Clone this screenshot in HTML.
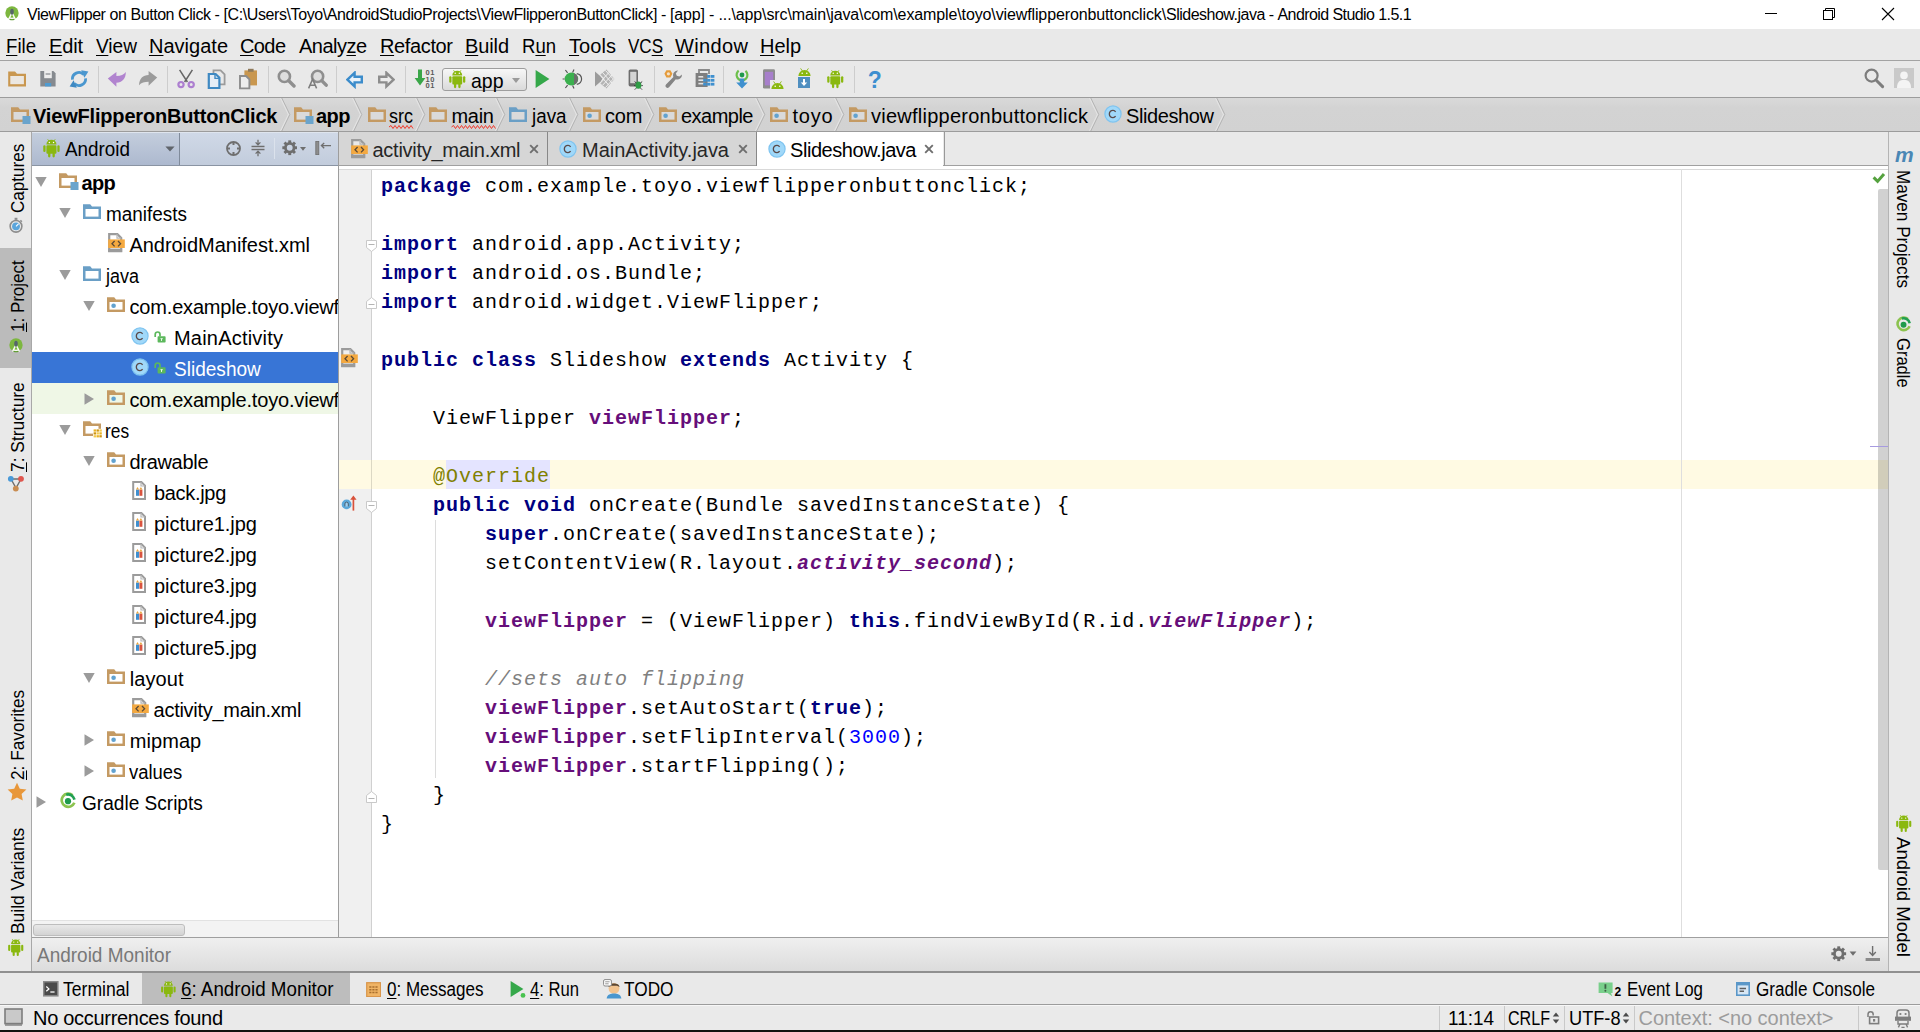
<!DOCTYPE html>
<html lang="en"><head><meta charset="utf-8"><title>ViewFlipper on Button Click - Android Studio 1.5.1</title><style>
html,body{margin:0;padding:0}
body{width:1920px;height:1032px;position:relative;overflow:hidden;background:#e9e9e9;font-family:"Liberation Sans",sans-serif;color:#000}
.a{position:absolute}
.t{position:absolute;white-space:pre;line-height:30px}
.c{position:absolute;white-space:pre;font-family:"Liberation Mono",monospace;font-size:20px;letter-spacing:1px;line-height:29px;left:381px;color:#000;height:29px}
.k{color:#000080;font-weight:bold}
.f{color:#660e7a;font-weight:bold}
.s{color:#660e7a;font-weight:bold;font-style:italic}
.n{color:#0000ff}
.m{color:#808080;font-style:italic}
.o{color:#808000}
u{text-decoration-thickness:1px;text-underline-offset:2px}
</style></head>
<body>
<div class="a" style="left:0px;top:0px;width:1920px;height:29px;background:#fff;"></div>
<svg class="a" style="left:5px;top:6.2px;" width="14" height="15.2" viewBox="0 0 18 19.6"><circle cx="9" cy="9" r="8.6" fill="#7db73f"/><path d="M9 8.6 L4.6 17.4 M9 8.6 L13.4 17.4" stroke="#fff" stroke-width="1.9" fill="none" opacity=".95"/><path d="M5.2 15 Q9 17.2 12.8 15" stroke="#fff" stroke-width="1.7" fill="none" opacity=".95"/><ellipse cx="9" cy="7.4" rx="2.3" ry="3.9" fill="#56656b"/><path d="M5.6 17.6 Q9 19 12.4 17.6 L11.8 16.4 Q9 17.6 6.2 16.4 Z" fill="#5d9a2e"/></svg>
<div class="t" style="left:27px;top:0px;font-size:16px;"><span style="letter-spacing:-0.436px">ViewFlipper on Button Click - </span><span style="letter-spacing:-0.405px">[C:\Users\Toyo\AndroidStudioProjects\ViewFlipperonButtonClick] - </span><span style="letter-spacing:-0.163px">[app] - </span><span style="letter-spacing:-0.122px">...\app\src\main\java\com\example\toyo\viewflipperonbuttonclick\</span><span style="letter-spacing:-0.504px">Slideshow.java - </span><span style="letter-spacing:-0.575px">Android Studio 1.5.1</span></div>
<svg class="a" style="left:1760px;top:4px;" width="140" height="20" viewBox="0 0 140 20"><path d="M5 9.5 H17" stroke="#000" stroke-width="1"/><rect x="63.5" y="6.5" width="9" height="9" fill="none" stroke="#000" stroke-width="1"/><path d="M65.5 6.5 V4.5 H74.5 V13.5 H72.5" fill="none" stroke="#000" stroke-width="1"/><path d="M122 4 L134 16 M134 4 L122 16" stroke="#000" stroke-width="1.1"/></svg>
<div class="a" style="left:0px;top:29px;width:1920px;height:31px;background:#e9e9e9;"></div>
<div class="a" style="left:0px;top:60px;width:1920px;height:1px;background:#a3a3a3;"></div>
<div class="t" style="left:6.00px;top:31px;font-size:20px;transform-origin:0 0;transform:scaleX(0.9311);"><u>F</u>ile</div>
<div class="t" style="left:49.00px;top:31px;font-size:20px;letter-spacing:-0.153px;"><u>E</u>dit</div>
<div class="t" style="left:96.00px;top:31px;font-size:20px;transform-origin:0 0;transform:scaleX(0.9526);"><u>V</u>iew</div>
<div class="t" style="left:149.00px;top:31px;font-size:20px;letter-spacing:0.009px;"><u>N</u>avigate</div>
<div class="t" style="left:240.00px;top:31px;font-size:20px;letter-spacing:-0.607px;"><u>C</u>ode</div>
<div class="t" style="left:299.00px;top:31px;font-size:20px;letter-spacing:-0.527px;">Analy<u>z</u>e</div>
<div class="t" style="left:380.00px;top:31px;font-size:20px;letter-spacing:-0.369px;"><u>R</u>efactor</div>
<div class="t" style="left:465.00px;top:31px;font-size:20px;letter-spacing:-0.120px;"><u>B</u>uild</div>
<div class="t" style="left:522.00px;top:31px;font-size:20px;transform-origin:0 0;transform:scaleX(0.9269);">R<u>u</u>n</div>
<div class="t" style="left:569.00px;top:31px;font-size:20px;letter-spacing:0.080px;"><u>T</u>ools</div>
<div class="t" style="left:628.00px;top:31px;font-size:20px;transform-origin:0 0;transform:scaleX(0.8512);">VC<u>S</u></div>
<div class="t" style="left:675.00px;top:31px;font-size:20px;letter-spacing:0.364px;"><u>W</u>indow</div>
<div class="t" style="left:760.00px;top:31px;font-size:20px;letter-spacing:-0.047px;"><u>H</u>elp</div>
<div class="a" style="left:0px;top:61px;width:1920px;height:36px;background:#e9e9e9;"></div>
<div class="a" style="left:0px;top:97px;width:1920px;height:1px;background:#9c9c9c;"></div>
<div class="a" style="left:98px;top:66px;width:1px;height:27px;background:#cdcdcd;"></div>
<div class="a" style="left:167px;top:66px;width:1px;height:27px;background:#cdcdcd;"></div>
<div class="a" style="left:268px;top:66px;width:1px;height:27px;background:#cdcdcd;"></div>
<div class="a" style="left:336px;top:66px;width:1px;height:27px;background:#cdcdcd;"></div>
<div class="a" style="left:405px;top:66px;width:1px;height:27px;background:#cdcdcd;"></div>
<div class="a" style="left:654px;top:66px;width:1px;height:27px;background:#cdcdcd;"></div>
<div class="a" style="left:723px;top:66px;width:1px;height:27px;background:#cdcdcd;"></div>
<div class="a" style="left:854px;top:66px;width:1px;height:27px;background:#cdcdcd;"></div>
<svg class="a" style="left:8px;top:71px;" width="19" height="16" viewBox="0 0 19 16"><path d="M0.2 0.4 H7 L9 2.8 H18 V15.4 H0.2 Z" fill="#c9974f"/><rect x="2.3" y="5" width="13.6" height="8.2" fill="#ebe7e1"/></svg>
<svg class="a" style="left:40px;top:71px;" width="16" height="16" viewBox="0 0 16 16"><path d="M0.3 0 H13.4 L15.6 2.2 V15.4 H0.3 Z" fill="#868a8f"/><rect x="4.2" y="0" width="7.6" height="7.2" fill="#ededed"/><rect x="5.6" y="2.4" width="4.8" height="1.2" fill="#868a8f"/><rect x="5" y="12" width="6.2" height="3.4" fill="#4f9bd0"/></svg>
<svg class="a" style="left:69px;top:69px;" width="20" height="20" viewBox="0 0 20 20"><path d="M3.4 10.6 A6.6 6.6 0 0 1 14.6 5.4 M16.6 9.4 A6.6 6.6 0 0 1 5.4 14.6" fill="none" stroke="#4a97cf" stroke-width="2.8"/><path d="M12.2 1.2 L19.4 2.4 L15.4 8.8 Z" fill="#4a97cf"/><path d="M7.8 18.8 L0.6 17.6 L4.6 11.2 Z" fill="#3f89c2"/></svg>
<svg class="a" style="left:107px;top:70px;" width="20" height="18" viewBox="0 0 20 18"><path d="M0.8 8.6 L9.4 2 V6 C14 6 16.8 4.4 18.8 2 C19 8.6 15 12.8 9.4 12.8 V16.8 Z" fill="#b184cf"/></svg>
<svg class="a" style="left:138px;top:70px;" width="20" height="18" viewBox="0 0 20 18"><path d="M19.2 7.6 L10.6 1 V5 C5 5 1.4 8.4 1 15.2 C3.4 12.4 6.4 11.8 10.6 11.8 V15.8 Z" fill="#9b9b9b"/></svg>
<svg class="a" style="left:176px;top:69px;" width="20" height="20" viewBox="0 0 20 20"><path d="M3.6 0.8 L11.4 13 M16.4 0.8 L8.6 13" stroke="#666" stroke-width="1.5" fill="none"/><circle cx="5" cy="15.6" r="2.6" fill="none" stroke="#ad7fd0" stroke-width="2.2"/><circle cx="15.2" cy="15.6" r="2.6" fill="none" stroke="#ad7fd0" stroke-width="2.2"/></svg>
<svg class="a" style="left:207px;top:69px;" width="20" height="21" viewBox="0 0 20 21"><path d="M6.5 1.4 H13.6 L17.6 5.4 V15.4 H6.5 Z" fill="#e9e9e9" stroke="#9b9b9b" stroke-width="1.8"/><path d="M1.8 5 H8.6 L12.4 8.8 V19 H1.8 Z" fill="#e6eef6" stroke="#3f89c2" stroke-width="2.2"/><path d="M8 5 V9.4 H12.4" fill="none" stroke="#3f89c2" stroke-width="1.4"/></svg>
<svg class="a" style="left:238px;top:68px;" width="20" height="22" viewBox="0 0 20 22"><rect x="6.4" y="2.4" width="12.6" height="15" fill="#c9974f"/><rect x="10" y="0.8" width="5.6" height="3" fill="#8f7a5a"/><path d="M2 8 H8 L11.4 11.4 V20.4 H2 Z" fill="#ededed" stroke="#8d8d8d" stroke-width="1.9"/></svg>
<svg class="a" style="left:276px;top:68px;" width="20" height="21" viewBox="0 0 20 21"><circle cx="8.4" cy="8.4" r="5.6" fill="#dedede" stroke="#8f8f8f" stroke-width="2.6"/><path d="M12.8 12.8 L18 18" stroke="#8f8f8f" stroke-width="3.4" stroke-linecap="round"/></svg>
<svg class="a" style="left:306px;top:68px;" width="22" height="22" viewBox="0 0 22 22"><circle cx="11.6" cy="8.4" r="5.6" fill="#dedede" stroke="#8f8f8f" stroke-width="2.6"/><path d="M16 12.8 L20.2 17.2" stroke="#8f8f8f" stroke-width="3.4" stroke-linecap="round"/><path d="M2.6 20.4 L6.6 11.2 L10.6 20.4 M4 17.2 H9.2" fill="none" stroke="#7d7d7d" stroke-width="1.5"/></svg>
<svg class="a" style="left:346px;top:71px;" width="18" height="18" viewBox="0 0 18 18"><path d="M1.4 8.6 L8.6 1.8 V5.8 H15.8 V11.4 H8.6 V15.4 Z" fill="#e9f2fa" stroke="#3b8ccb" stroke-width="2.4"/></svg>
<svg class="a" style="left:377px;top:71px;" width="18" height="18" viewBox="0 0 18 18"><path d="M16.6 8.6 L9.4 1.8 V5.8 H2.2 V11.4 H9.4 V15.4 Z" fill="#ececec" stroke="#8d8d8d" stroke-width="2.4"/></svg>
<svg class="a" style="left:414px;top:69px;" width="12" height="18" viewBox="0 0 12 18"><path d="M4 0.6 H8 V9 H11.4 L6 16.6 L0.6 9 H4 Z" fill="#3aa648"/></svg>
<div class="t" style="left:425.50px;top:58px;font-size:7.5px;letter-spacing:0.660px;color:#5a5a5a;font-weight:bold;">01</div>
<div class="t" style="left:425.50px;top:65px;font-size:7.5px;letter-spacing:0.660px;color:#5a5a5a;font-weight:bold;">10</div>
<div class="t" style="left:425.50px;top:71px;font-size:7.5px;letter-spacing:0.660px;color:#5a5a5a;font-weight:bold;">01</div>
<div class="a" style="left:442px;top:68px;width:85px;height:23px;background:linear-gradient(#f7f7f7,#dadada);border:1px solid #9d9d9d;border-radius:3px;box-sizing:border-box;"></div>
<svg class="a" style="left:447.73px;top:69.215px;" width="18.54" height="19.57" viewBox="0 0 18 19"><g fill="#8ab80f"><path d="M4.2 6.2 A4.8 4.6 0 0 1 13.8 6.2 Z"/><rect x="4.2" y="7" width="9.6" height="8" rx="1"/><rect x="1.2" y="7" width="2.2" height="6.4" rx="1.1"/><rect x="14.6" y="7" width="2.2" height="6.4" rx="1.1"/><rect x="5.8" y="14" width="2.2" height="4.6" rx="1.1"/><rect x="10" y="14" width="2.2" height="4.6" rx="1.1"/><path d="M5.4 1.2 L6.6 3 M12.6 1.2 L11.4 3" stroke="#8ab80f" stroke-width="0.8"/></g><circle cx="7" cy="4.2" r="0.7" fill="#fff"/><circle cx="11" cy="4.2" r="0.7" fill="#fff"/></svg>
<div class="t" style="left:470.50px;top:66px;font-size:21px;transform-origin:0 0;transform:scaleX(0.9278);">app</div>
<svg class="a" style="left:511.5px;top:77.5px;" width="8" height="5" viewBox="0 0 8 5"><path d="M0 0 H8 L4 5 Z" fill="#9a9a9a"/></svg>
<svg class="a" style="left:535px;top:70px;" width="15" height="18" viewBox="0 0 15 18"><path d="M0.6 0 L14.4 9 L0.6 18 Z" fill="#35a84a"/></svg>
<svg class="a" style="left:562px;top:68px;" width="23" height="22" viewBox="0 0 23 22"><ellipse cx="9.4" cy="11" rx="6.8" ry="6.4" fill="#3bb04e"/><path d="M12 5.2 A6.8 6.4 0 0 1 12 16.8 Z" fill="#6d6d6d"/><path d="M5.6 4.8 L3.4 2 M10.6 4.4 L12 1.6 M5.6 17.2 L3.4 20 M10.6 17.6 L12 20.4 M2.6 11 H0.6 M14.8 5.6 C17.6 6 19.4 8 19.6 11 C19.4 14 17.6 16 14.8 16.4" fill="none" stroke="#555" stroke-width="1.2"/></svg>
<svg class="a" style="left:594px;top:69px;" width="22" height="20" viewBox="0 0 22 20"><path d="M1 2.4 L9.6 10 L1 17.6 Z" fill="#9b9b9b"/><path d="M6.4 5.6 L12.4 0.6 L20.4 10 L12.4 19.4 L6.4 14.4 L10.8 10 Z" fill="#b4b4b4"/><path d="M8.4 3.4 L18 14 M11.4 1.4 L19.8 10.6 M7 7.4 L15 16.4 M18 6 L8.8 16 M19.8 9.4 L11.4 18.6 M15 3.4 L7.4 11.6" stroke="#f0f0f0" stroke-width="1" fill="none"/></svg>
<svg class="a" style="left:627px;top:68px;" width="20" height="23" viewBox="0 0 20 23"><rect x="1.6" y="1.4" width="9.4" height="17" rx="1.6" fill="#6d6d6d"/><rect x="3.2" y="3.8" width="6.2" height="11.4" fill="#d4d4d4"/><ellipse cx="11.4" cy="17.2" rx="3" ry="3.6" fill="#2f9e47"/><path d="M7.6 13.6 L9.4 15 M15.2 13.6 L13.4 15 M7 17.6 H8.4 M15.8 17.6 H14.4 M7.8 21.6 L9.2 20.2 M15 21.6 L13.6 20.2" stroke="#3a3a3a" stroke-width="1"/></svg>
<svg class="a" style="left:663px;top:69px;" width="21" height="21" viewBox="0 0 21 21"><path d="M19 5.6 A4.6 4.6 0 0 1 12.8 10.2 L6 18.2 A2 2 0 0 1 3 15.4 L10.4 8 A4.6 4.6 0 0 1 15 1.6 L12.8 4.4 L13.8 6.8 L16.4 7.4 Z" fill="#858585"/><path d="M3.4 1.2 L7.4 1.2 L9.4 4.8 L7.4 8.4 L3.4 8.4 L1.4 4.8 Z" fill="#e59b3a"/><circle cx="5.4" cy="4.8" r="1.6" fill="#f4e2c8"/></svg>
<svg class="a" style="left:695px;top:69px;" width="20" height="20" viewBox="0 0 20 20"><path d="M4 5 V1 H14 V5" fill="none" stroke="#8a8a8a" stroke-width="1.8"/><rect x="0.6" y="4" width="12" height="14" fill="#7f7f7f"/><rect x="3.4" y="7" width="6" height="1.6" fill="#e4e4e4"/><rect x="3.4" y="10.4" width="6" height="1.6" fill="#e4e4e4"/><rect x="3.4" y="13.8" width="6" height="1.6" fill="#e4e4e4"/><rect x="12.1" y="6" width="3.4" height="2.8" fill="#3f90cf"/><rect x="16" y="6" width="3.4" height="2.8" fill="#3f90cf"/><rect x="8.2" y="9.9" width="3.4" height="2.8" fill="#3f90cf"/><rect x="12.1" y="9.9" width="3.4" height="2.8" fill="#3f90cf"/><rect x="16" y="9.9" width="3.4" height="2.8" fill="#3f90cf"/><rect x="8.2" y="13.8" width="3.4" height="2.8" fill="#3f90cf"/><rect x="12.1" y="13.8" width="3.4" height="2.8" fill="#3f90cf"/><rect x="16" y="13.8" width="3.4" height="2.8" fill="#3f90cf"/><rect x="8.2" y="6" width="3.4" height="2.8" fill="#7f7f7f"/></svg>
<svg class="a" style="left:732px;top:68px;" width="20" height="22" viewBox="0 0 20 22"><circle cx="10" cy="7" r="5.4" fill="none" stroke="#6cc04a" stroke-width="2.2" stroke-dasharray="26 8" transform="rotate(-50 10 7)"/><circle cx="10" cy="7" r="2.4" fill="#1f9a4c"/><path d="M7.8 10.4 H12.2 V14.6 H15.8 L10 20.6 L4.2 14.6 H7.8 Z" fill="#3f90cf"/></svg>
<svg class="a" style="left:762px;top:68px;" width="15" height="22" viewBox="0 0 15 22"><rect x="1" y="1.2" width="12" height="19.4" rx="1.4" fill="#8d8d8d"/><rect x="2.8" y="3.8" width="8.4" height="13.6" fill="#a77fcb"/></svg>
<div class="a" style="left:769.6px;top:80px;width:14.4px;height:9px;background:#e9e9e9;"></div>
<svg class="a" style="left:770.5px;top:80.8px;" width="13" height="8" viewBox="0 0 13 8"><path d="M0.4 8 A6.1 6 0 0 1 12.6 8 Z" fill="#8ab80f"/><path d="M2.6 0.4 L4.4 3 M10.4 0.4 L8.6 3" stroke="#8ab80f" stroke-width="0.9"/><circle cx="4.2" cy="5.2" r="0.8" fill="#fff"/><circle cx="8.8" cy="5.2" r="0.8" fill="#fff"/></svg>
<svg class="a" style="left:797.5px;top:68.4px;" width="13" height="8" viewBox="0 0 13 8"><path d="M0.4 8 A6.1 6 0 0 1 12.6 8 Z" fill="#8ab80f"/><path d="M2.6 0.4 L4.4 3 M10.4 0.4 L8.6 3" stroke="#8ab80f" stroke-width="0.9"/><circle cx="4.2" cy="5.2" r="0.8" fill="#fff"/><circle cx="8.8" cy="5.2" r="0.8" fill="#fff"/></svg>
<svg class="a" style="left:798px;top:77px;" width="12" height="11" viewBox="0 0 12 11"><rect x="0" y="0" width="12" height="11" fill="#4f8fc0"/><path d="M5 2 H7 V5.4 H9.2 L6 9 L2.8 5.4 H5 Z" fill="#fff"/></svg>
<svg class="a" style="left:825.73px;top:69.215px;" width="18.54" height="19.57" viewBox="0 0 18 19"><g fill="#8ab80f"><path d="M4.2 6.2 A4.8 4.6 0 0 1 13.8 6.2 Z"/><rect x="4.2" y="7" width="9.6" height="8" rx="1"/><rect x="1.2" y="7" width="2.2" height="6.4" rx="1.1"/><rect x="14.6" y="7" width="2.2" height="6.4" rx="1.1"/><rect x="5.8" y="14" width="2.2" height="4.6" rx="1.1"/><rect x="10" y="14" width="2.2" height="4.6" rx="1.1"/><path d="M5.4 1.2 L6.6 3 M12.6 1.2 L11.4 3" stroke="#8ab80f" stroke-width="0.8"/></g><circle cx="7" cy="4.2" r="0.7" fill="#fff"/><circle cx="11" cy="4.2" r="0.7" fill="#fff"/></svg>
<div class="t" style="left:867.8px;top:65px;font-size:23px;color:#3d8fd0;font-weight:bold;">?</div>
<svg class="a" style="left:1863px;top:67px;" width="22" height="22" viewBox="0 0 22 22"><circle cx="8.6" cy="8.6" r="6" fill="none" stroke="#7d7d7d" stroke-width="2.2"/><path d="M13 13 L19.6 19.6" stroke="#7d7d7d" stroke-width="3" stroke-linecap="round"/></svg>
<div class="a" style="left:1894px;top:68px;width:20px;height:20px;background:#c9c9c9;"></div>
<svg class="a" style="left:1894px;top:68px;" width="20" height="20" viewBox="0 0 20 20"><circle cx="10" cy="7.4" r="3.8" fill="#f4f4f4"/><path d="M3 20 C3 13.6 6 12 10 12 C14 12 17 13.6 17 20 Z" fill="#f4f4f4"/></svg>
<div class="a" style="left:0px;top:98px;width:1920px;height:33px;background:linear-gradient(#d9d9d9,#d3d3d3 30%,#d2d2d2);"></div>
<div class="a" style="left:0px;top:131px;width:1920px;height:1px;background:#9c9c9c;"></div>
<svg class="a" style="left:11px;top:106.5px;" width="20" height="18" viewBox="0 0 20 18"><path d="M0 0.3 H7.2 L9 2.6 H18 V15 H0 Z" fill="#c49a63"/><rect x="2.5" y="5" width="13" height="7.6" fill="#dadada"/><rect x="11.5" y="9" width="8" height="8" fill="#6aa4cc" stroke="#dadada" stroke-width="0"/></svg>
<div class="t" style="left:33.00px;top:101px;font-size:20px;letter-spacing:-0.177px;font-weight:bold;">ViewFlipperonButtonClick</div>
<svg class="a" style="left:280px;top:98px;" width="11" height="33" viewBox="0 0 11 33"><path d="M0.5 0 L8.5 16.5 L0.5 33" fill="none" stroke="#e3e3e3" stroke-width="1.2"/><path d="M1.8 0 L9.8 16.5 L1.8 33" fill="none" stroke="#b4b4b4" stroke-width="1"/></svg>
<svg class="a" style="left:294px;top:106.5px;" width="20" height="18" viewBox="0 0 20 18"><path d="M0 0.3 H7.2 L9 2.6 H18 V15 H0 Z" fill="#c49a63"/><rect x="2.5" y="5" width="13" height="7.6" fill="#dadada"/><rect x="11.5" y="9" width="8" height="8" fill="#6aa4cc" stroke="#dadada" stroke-width="0"/></svg>
<div class="t" style="left:316.00px;top:101px;font-size:20px;letter-spacing:-0.530px;font-weight:bold;">app</div>
<svg class="a" style="left:352px;top:98px;" width="11" height="33" viewBox="0 0 11 33"><path d="M0.5 0 L8.5 16.5 L0.5 33" fill="none" stroke="#e3e3e3" stroke-width="1.2"/><path d="M1.8 0 L9.8 16.5 L1.8 33" fill="none" stroke="#b4b4b4" stroke-width="1"/></svg>
<svg class="a" style="left:367.5px;top:106.5px;" width="20" height="18" viewBox="0 0 20 18"><path d="M0 0.3 H7.2 L9 2.6 H18 V15 H0 Z" fill="#c49a63"/><rect x="2.5" y="5" width="13" height="7.6" fill="#dadada"/></svg>
<div class="t" style="left:389.00px;top:101px;font-size:20px;transform-origin:0 0;transform:scaleX(0.9002);">src</div>
<svg class="a" style="left:415px;top:98px;" width="11" height="33" viewBox="0 0 11 33"><path d="M0.5 0 L8.5 16.5 L0.5 33" fill="none" stroke="#e3e3e3" stroke-width="1.2"/><path d="M1.8 0 L9.8 16.5 L1.8 33" fill="none" stroke="#b4b4b4" stroke-width="1"/></svg>
<svg class="a" style="left:429px;top:106.5px;" width="20" height="18" viewBox="0 0 20 18"><path d="M0 0.3 H7.2 L9 2.6 H18 V15 H0 Z" fill="#c49a63"/><rect x="2.5" y="5" width="13" height="7.6" fill="#dadada"/></svg>
<div class="t" style="left:451.50px;top:101px;font-size:20px;letter-spacing:-0.287px;">main</div>
<svg class="a" style="left:494.5px;top:98px;" width="11" height="33" viewBox="0 0 11 33"><path d="M0.5 0 L8.5 16.5 L0.5 33" fill="none" stroke="#e3e3e3" stroke-width="1.2"/><path d="M1.8 0 L9.8 16.5 L1.8 33" fill="none" stroke="#b4b4b4" stroke-width="1"/></svg>
<svg class="a" style="left:509px;top:106.5px;" width="20" height="18" viewBox="0 0 20 18"><path d="M0 0.3 H7.2 L9 2.6 H18 V15 H0 Z" fill="#6a9fc6"/><rect x="2.5" y="5" width="13" height="7.6" fill="#dadada"/></svg>
<div class="t" style="left:531.97px;top:101px;font-size:20px;transform-origin:0 0;transform:scaleX(0.9409);">java</div>
<svg class="a" style="left:567.5px;top:98px;" width="11" height="33" viewBox="0 0 11 33"><path d="M0.5 0 L8.5 16.5 L0.5 33" fill="none" stroke="#e3e3e3" stroke-width="1.2"/><path d="M1.8 0 L9.8 16.5 L1.8 33" fill="none" stroke="#b4b4b4" stroke-width="1"/></svg>
<svg class="a" style="left:583px;top:106.5px;" width="20" height="18" viewBox="0 0 20 18"><path d="M0 0.3 H7.2 L9 2.6 H18 V15 H0 Z" fill="#c49a63"/><rect x="2.5" y="5" width="13" height="7.6" fill="#dadada"/><circle cx="6.6" cy="8.8" r="2.3" fill="#62a2cf"/></svg>
<div class="t" style="left:605.00px;top:101px;font-size:20px;letter-spacing:-0.140px;">com</div>
<svg class="a" style="left:643.5px;top:98px;" width="11" height="33" viewBox="0 0 11 33"><path d="M0.5 0 L8.5 16.5 L0.5 33" fill="none" stroke="#e3e3e3" stroke-width="1.2"/><path d="M1.8 0 L9.8 16.5 L1.8 33" fill="none" stroke="#b4b4b4" stroke-width="1"/></svg>
<svg class="a" style="left:659px;top:106.5px;" width="20" height="18" viewBox="0 0 20 18"><path d="M0 0.3 H7.2 L9 2.6 H18 V15 H0 Z" fill="#c49a63"/><rect x="2.5" y="5" width="13" height="7.6" fill="#dadada"/><circle cx="6.6" cy="8.8" r="2.3" fill="#62a2cf"/></svg>
<div class="t" style="left:681.00px;top:101px;font-size:20px;letter-spacing:-0.517px;">example</div>
<svg class="a" style="left:754.5px;top:98px;" width="11" height="33" viewBox="0 0 11 33"><path d="M0.5 0 L8.5 16.5 L0.5 33" fill="none" stroke="#e3e3e3" stroke-width="1.2"/><path d="M1.8 0 L9.8 16.5 L1.8 33" fill="none" stroke="#b4b4b4" stroke-width="1"/></svg>
<svg class="a" style="left:770px;top:106.5px;" width="20" height="18" viewBox="0 0 20 18"><path d="M0 0.3 H7.2 L9 2.6 H18 V15 H0 Z" fill="#c49a63"/><rect x="2.5" y="5" width="13" height="7.6" fill="#dadada"/><circle cx="6.6" cy="8.8" r="2.3" fill="#62a2cf"/></svg>
<div class="t" style="left:792.50px;top:101px;font-size:20px;letter-spacing:0.733px;">toyo</div>
<svg class="a" style="left:833.5px;top:98px;" width="11" height="33" viewBox="0 0 11 33"><path d="M0.5 0 L8.5 16.5 L0.5 33" fill="none" stroke="#e3e3e3" stroke-width="1.2"/><path d="M1.8 0 L9.8 16.5 L1.8 33" fill="none" stroke="#b4b4b4" stroke-width="1"/></svg>
<svg class="a" style="left:848.5px;top:106.5px;" width="20" height="18" viewBox="0 0 20 18"><path d="M0 0.3 H7.2 L9 2.6 H18 V15 H0 Z" fill="#c49a63"/><rect x="2.5" y="5" width="13" height="7.6" fill="#dadada"/><circle cx="6.6" cy="8.8" r="2.3" fill="#62a2cf"/></svg>
<div class="t" style="left:871.00px;top:101px;font-size:20px;letter-spacing:0.250px;">viewflipperonbuttonclick</div>
<svg class="a" style="left:1088.5px;top:98px;" width="11" height="33" viewBox="0 0 11 33"><path d="M0.5 0 L8.5 16.5 L0.5 33" fill="none" stroke="#e3e3e3" stroke-width="1.2"/><path d="M1.8 0 L9.8 16.5 L1.8 33" fill="none" stroke="#b4b4b4" stroke-width="1"/></svg>
<svg class="a" style="left:1102.5px;top:104px;" width="20" height="20" viewBox="0 0 20 20"><circle cx="10" cy="10" r="8.1" fill="#a0d8f9" stroke="#7fc4f0" stroke-width="1.2"/><path d="M12.6 7.8 A3.5 3.6 0 1 0 12.6 12.2" fill="none" stroke="#5a4a4a" stroke-width="1.35"/></svg>
<div class="t" style="left:1126.00px;top:101px;font-size:20px;letter-spacing:-0.402px;">Slideshow</div>
<svg class="a" style="left:1215px;top:98px;" width="11" height="33" viewBox="0 0 11 33"><path d="M0.5 0 L8.5 16.5 L0.5 33" fill="none" stroke="#e3e3e3" stroke-width="1.2"/><path d="M1.8 0 L9.8 16.5 L1.8 33" fill="none" stroke="#b4b4b4" stroke-width="1"/></svg>
<svg class="a" style="left:0;top:0" width="1920" height="140"><path d="M389 127 L391 125.5 L393 128.5 L395 125.5 L397 128.5 L399 125.5 L401 128.5 L403 125.5 L405 128.5 L407 125.5 L409 128.5 L411 125.5 L413 128.5" fill="none" stroke="#f0392b" stroke-width="1"/></svg>
<svg class="a" style="left:0;top:0" width="1920" height="140"><path d="M451.5 127 L453.5 125.5 L455.5 128.5 L457.5 125.5 L459.5 128.5 L461.5 125.5 L463.5 128.5 L465.5 125.5 L467.5 128.5 L469.5 125.5 L471.5 128.5 L473.5 125.5 L475.5 128.5 L477.5 125.5 L479.5 128.5 L481.5 125.5 L483.5 128.5 L485.5 125.5 L487.5 128.5 L489.5 125.5 L491.5 128.5 L493.5 125.5 L495.5 128.5" fill="none" stroke="#f0392b" stroke-width="1"/></svg>
<div class="a" style="left:0px;top:132px;width:31px;height:840px;background:#e9e9e9;"></div>
<div class="a" style="left:0px;top:248px;width:31px;height:120px;background:#bbbbbb;"></div>
<div class="a" style="left:31px;top:132px;width:1px;height:840px;background:#a8a8a8;"></div>
<div class="t" style="left:7.5px;top:213.20px;font-size:19px;line-height:19px;color:#000;transform-origin:0 0;transform:rotate(-90deg) scaleX(0.8975)">Captures</div>
<svg class="a" style="left:7.8px;top:216.8px;" width="16" height="17" viewBox="0 0 18 19"><circle cx="9" cy="10.4" r="6.6" fill="#e9e9e9" stroke="#8d8d8d" stroke-width="1.8"/><circle cx="9" cy="10.4" r="4.4" fill="#5aa5dc"/><path d="M9 10.4 L12 7.4" stroke="#fff" stroke-width="1.2"/><rect x="7.4" y="0.8" width="3.2" height="2.4" fill="#8d8d8d"/><path d="M14 3.6 L15.6 5.2" stroke="#8d8d8d" stroke-width="1.6"/></svg>
<div class="t" style="left:7.5px;top:332.00px;font-size:19px;line-height:19px;color:#000;transform-origin:0 0;transform:rotate(-90deg) scaleX(0.8934)"><u>1</u>: Project</div>
<svg class="a" style="left:9px;top:337.5px;" width="14" height="15.2" viewBox="0 0 18 19.6"><circle cx="9" cy="9" r="8.6" fill="#7db73f"/><path d="M9 8.6 L4.6 17.4 M9 8.6 L13.4 17.4" stroke="#fff" stroke-width="1.9" fill="none" opacity=".95"/><path d="M5.2 15 Q9 17.2 12.8 15" stroke="#fff" stroke-width="1.7" fill="none" opacity=".95"/><ellipse cx="9" cy="7.4" rx="2.3" ry="3.9" fill="#56656b"/><path d="M5.6 17.6 Q9 19 12.4 17.6 L11.8 16.4 Q9 17.6 6.2 16.4 Z" fill="#5d9a2e"/></svg>
<div class="t" style="left:7.5px;top:471.70px;font-size:19px;line-height:19px;color:#000;transform-origin:0 0;transform:rotate(-90deg) scaleX(0.9133)"><u>7</u>: Structure</div>
<svg class="a" style="left:6.3px;top:474.3px;" width="20" height="19" viewBox="0 0 20 19"><path d="M5 5 L15 5 L10 14 Z" fill="none" stroke="#6e6e6e" stroke-width="1.4"/><circle cx="4.8" cy="4.8" r="2.9" fill="#4a9ad8"/><circle cx="15" cy="4.8" r="2.9" fill="#e0574f"/><circle cx="9.8" cy="14.6" r="2.9" fill="#c98d52"/></svg>
<div class="t" style="left:7.5px;top:779.70px;font-size:19px;line-height:19px;color:#000;transform-origin:0 0;transform:rotate(-90deg) scaleX(0.9078)"><u>2</u>: Favorites</div>
<svg class="a" style="left:6.5px;top:782px;" width="20" height="19" viewBox="0 0 20 19"><path d="M10 0.8 L12.8 6.8 L19.4 7.6 L14.6 12 L15.8 18.6 L10 15.4 L4.2 18.6 L5.4 12 L0.6 7.6 L7.2 6.8 Z" fill="#e8973a"/></svg>
<div class="t" style="left:7.5px;top:934.20px;font-size:19px;line-height:19px;color:#000;transform-origin:0 0;transform:rotate(-90deg) scaleX(0.9169)">Build Variants</div>
<svg class="a" style="left:7.37px;top:938.085px;" width="17.46" height="18.43" viewBox="0 0 18 19"><g fill="#8ab80f"><path d="M4.2 6.2 A4.8 4.6 0 0 1 13.8 6.2 Z"/><rect x="4.2" y="7" width="9.6" height="8" rx="1"/><rect x="1.2" y="7" width="2.2" height="6.4" rx="1.1"/><rect x="14.6" y="7" width="2.2" height="6.4" rx="1.1"/><rect x="5.8" y="14" width="2.2" height="4.6" rx="1.1"/><rect x="10" y="14" width="2.2" height="4.6" rx="1.1"/><path d="M5.4 1.2 L6.6 3 M12.6 1.2 L11.4 3" stroke="#8ab80f" stroke-width="0.8"/></g><circle cx="7" cy="4.2" r="0.7" fill="#fff"/><circle cx="11" cy="4.2" r="0.7" fill="#fff"/></svg>
<div class="a" style="left:32px;top:132px;width:306px;height:33px;background:linear-gradient(#d0d9e7,#c2ccdc);"></div>
<div class="a" style="left:32px;top:132px;width:147px;height:33px;background:linear-gradient(#c4cedd,#adb9cf);"></div>
<div class="a" style="left:179px;top:132px;width:1px;height:33px;background:#808b9b;"></div>
<div class="a" style="left:32px;top:132px;width:306px;height:1px;background:#dfe5ee;"></div>
<div class="a" style="left:32px;top:165px;width:306px;height:1px;background:#8a94a3;"></div>
<div class="a" style="left:32px;top:166px;width:306px;height:754px;background:#fff;"></div>
<div class="a" style="left:338px;top:132px;width:1px;height:806px;background:#9d9d9d;"></div>
<svg class="a" style="left:41.55px;top:138.125px;" width="18.9" height="19.95" viewBox="0 0 18 19"><g fill="#8ab80f"><path d="M4.2 6.2 A4.8 4.6 0 0 1 13.8 6.2 Z"/><rect x="4.2" y="7" width="9.6" height="8" rx="1"/><rect x="1.2" y="7" width="2.2" height="6.4" rx="1.1"/><rect x="14.6" y="7" width="2.2" height="6.4" rx="1.1"/><rect x="5.8" y="14" width="2.2" height="4.6" rx="1.1"/><rect x="10" y="14" width="2.2" height="4.6" rx="1.1"/><path d="M5.4 1.2 L6.6 3 M12.6 1.2 L11.4 3" stroke="#8ab80f" stroke-width="0.8"/></g><circle cx="7" cy="4.2" r="0.7" fill="#fff"/><circle cx="11" cy="4.2" r="0.7" fill="#fff"/></svg>
<div class="t" style="left:65.00px;top:134px;font-size:20px;transform-origin:0 0;transform:scaleX(0.9428);">Android</div>
<svg class="a" style="left:164.5px;top:146px;" width="10" height="6" viewBox="0 0 10 6"><path d="M0.4 0.4 H9.6 L5 5.6 Z" fill="#5f646b"/></svg>
<svg class="a" style="left:225px;top:139.5px;" width="17" height="17" viewBox="0 0 17 17"><circle cx="8.5" cy="8.5" r="6.5" fill="none" stroke="#6e6e6e" stroke-width="1.8"/><path d="M8.5 2 V5 M8.5 12 V15 M2 8.5 H5 M12 8.5 H15" stroke="#6e6e6e" stroke-width="2"/></svg>
<svg class="a" style="left:250.5px;top:139px;" width="14" height="18" viewBox="0 0 14 18"><path d="M0.5 7.3 H13.5 M0.5 10.7 H13.5" stroke="#6e6e6e" stroke-width="1.3"/><path d="M0.5 9 H13.5" stroke="#b9bec8" stroke-width="2"/><path d="M7 0.8 V5.6 M4.6 3.4 L7 5.8 L9.4 3.4 M7 17.2 V12.4 M4.6 14.6 L7 12.2 L9.4 14.6" fill="none" stroke="#6e6e6e" stroke-width="1.3"/></svg>
<div class="a" style="left:273.5px;top:138px;width:1px;height:21px;background:#dbe2ec;"></div>
<svg class="a" style="left:281.76px;top:140.26px;" width="15.48" height="15.48" viewBox="0 0 18 18"><g transform="translate(9 9)"><rect x="-1.7" y="-8.6" width="3.4" height="4" fill="#6e6e6e" transform="rotate(0)"/><rect x="-1.7" y="-8.6" width="3.4" height="4" fill="#6e6e6e" transform="rotate(45)"/><rect x="-1.7" y="-8.6" width="3.4" height="4" fill="#6e6e6e" transform="rotate(90)"/><rect x="-1.7" y="-8.6" width="3.4" height="4" fill="#6e6e6e" transform="rotate(135)"/><rect x="-1.7" y="-8.6" width="3.4" height="4" fill="#6e6e6e" transform="rotate(180)"/><rect x="-1.7" y="-8.6" width="3.4" height="4" fill="#6e6e6e" transform="rotate(225)"/><rect x="-1.7" y="-8.6" width="3.4" height="4" fill="#6e6e6e" transform="rotate(270)"/><rect x="-1.7" y="-8.6" width="3.4" height="4" fill="#6e6e6e" transform="rotate(315)"/><circle r="5" fill="none" stroke="#6e6e6e" stroke-width="3.2"/></g></svg>
<svg class="a" style="left:300px;top:147px;" width="6" height="4" viewBox="0 0 6 4"><path d="M0 0 H6 L3 3.8 Z" fill="#6e6e6e"/></svg>
<svg class="a" style="left:314px;top:140px;" width="18" height="16" viewBox="0 0 18 16"><rect x="1.8" y="1.4" width="3" height="13.2" fill="#8d8d8d" stroke="#6e6e6e" stroke-width="0.8"/><path d="M17 5.6 H7.4 M10.2 3 L7.4 5.6 L10.2 8.2" fill="none" stroke="#6e6e6e" stroke-width="1.3"/></svg>
<svg class="a" style="left:35px;top:175.5px;" width="12" height="12" viewBox="0 0 12 12"><path d="M0.3 1 L11.7 1 L6 11 Z" fill="#9b9b9b"/></svg>
<svg class="a" style="left:59px;top:173px;" width="20" height="18" viewBox="0 0 20 18"><path d="M0 0.3 H7.2 L9 2.6 H18 V15 H0 Z" fill="#c49a63"/><rect x="2.5" y="5" width="13" height="7.6" fill="#fff"/><rect x="11.5" y="9" width="8" height="8" fill="#6aa4cc" stroke="#fff" stroke-width="0"/></svg>
<div class="t" style="left:81.50px;top:168px;font-size:20px;letter-spacing:-0.730px;font-weight:bold;">app</div>
<svg class="a" style="left:59px;top:206.5px;" width="12" height="12" viewBox="0 0 12 12"><path d="M0.3 1 L11.7 1 L6 11 Z" fill="#9b9b9b"/></svg>
<svg class="a" style="left:83px;top:204px;" width="20" height="18" viewBox="0 0 20 18"><path d="M0 0.3 H7.2 L9 2.6 H18 V15 H0 Z" fill="#6a9fc6"/><rect x="2.5" y="5" width="13" height="7.6" fill="#fff"/></svg>
<div class="t" style="left:105.50px;top:199px;font-size:20px;transform-origin:0 0;transform:scaleX(0.9465);">manifests</div>
<svg class="a" style="left:108.4px;top:233px;" width="18" height="20" viewBox="0 0 18 20"><path d="M1.2 1.1 H9.4 L13.2 4.9 V18.2 H1.2 Z" fill="#fff" stroke="#9b9b9b" stroke-width="2.2"/><path d="M9 1 V5.2 H13.2" fill="none" stroke="#b5b5b5" stroke-width="1.2"/><rect x="0.2" y="6.4" width="16.6" height="8.6" fill="#f4a940"/><path d="M6.6 8 L4 10.7 L6.6 13.4 M10 8 L12.6 10.7 L10 13.4" fill="none" stroke="#5b4a36" stroke-width="1.3"/><rect x="0.2" y="15.6" width="13.9" height="3.4" fill="#9b9b9b"/></svg>
<div class="t" style="left:129.40px;top:230px;font-size:20px;letter-spacing:-0.032px;">AndroidManifest.xml</div>
<svg class="a" style="left:59px;top:268.5px;" width="12" height="12" viewBox="0 0 12 12"><path d="M0.3 1 L11.7 1 L6 11 Z" fill="#9b9b9b"/></svg>
<svg class="a" style="left:83px;top:266px;" width="20" height="18" viewBox="0 0 20 18"><path d="M0 0.3 H7.2 L9 2.6 H18 V15 H0 Z" fill="#6a9fc6"/><rect x="2.5" y="5" width="13" height="7.6" fill="#fff"/></svg>
<div class="t" style="left:105.95px;top:261px;font-size:20px;transform-origin:0 0;transform:scaleX(0.9005);">java</div>
<svg class="a" style="left:83px;top:299.5px;" width="12" height="12" viewBox="0 0 12 12"><path d="M0.3 1 L11.7 1 L6 11 Z" fill="#9b9b9b"/></svg>
<svg class="a" style="left:107px;top:297px;" width="20" height="18" viewBox="0 0 20 18"><path d="M0 0.3 H7.2 L9 2.6 H18 V15 H0 Z" fill="#c49a63"/><rect x="2.5" y="5" width="13" height="7.6" fill="#fff"/><circle cx="6.6" cy="8.8" r="2.3" fill="#62a2cf"/></svg>
<div class="t" style="left:129.5px;top:292px;width:208px;overflow:hidden;font-size:20px;letter-spacing:-0.178px">com.example.toyo.viewflipperonbuttonclick</div>
<svg class="a" style="left:130px;top:326px;" width="20" height="20" viewBox="0 0 20 20"><circle cx="10" cy="10" r="8.1" fill="#a0d8f9" stroke="#7fc4f0" stroke-width="1.2"/><path d="M12.6 7.8 A3.5 3.6 0 1 0 12.6 12.2" fill="none" stroke="#5a4a4a" stroke-width="1.35"/></svg>
<svg class="a" style="left:153.6px;top:330.6px;" width="12" height="12" viewBox="0 0 12 12"><path d="M1.2 6 V3.4 A2.4 2.4 0 0 1 6 3.4 V5.4" fill="none" stroke="#5cb85c" stroke-width="1.7"/><rect x="3.6" y="5.2" width="8" height="6.4" rx="0.8" fill="#5cb85c"/><path d="M6.2 7.2 H9 L8 8.4 V10 H7.2 V8.4 Z" fill="#fff"/></svg>
<div class="t" style="left:174.00px;top:323px;font-size:20px;letter-spacing:0.209px;">MainActivity</div>
<div class="a" style="left:32px;top:352px;width:306px;height:31px;background:#3875d6;"></div>
<svg class="a" style="left:130px;top:357px;" width="20" height="20" viewBox="0 0 20 20"><circle cx="10" cy="10" r="8.1" fill="#a0d8f9" stroke="#7fc4f0" stroke-width="1.2"/><path d="M12.6 7.8 A3.5 3.6 0 1 0 12.6 12.2" fill="none" stroke="#5a4a4a" stroke-width="1.35"/></svg>
<svg class="a" style="left:153.6px;top:361.6px;" width="12" height="12" viewBox="0 0 12 12"><path d="M1.2 6 V3.4 A2.4 2.4 0 0 1 6 3.4 V5.4" fill="none" stroke="#5cb85c" stroke-width="1.7"/><rect x="3.6" y="5.2" width="8" height="6.4" rx="0.8" fill="#5cb85c"/><path d="M6.2 7.2 H9 L8 8.4 V10 H7.2 V8.4 Z" fill="#fff"/></svg>
<div class="t" style="left:173.60px;top:354px;font-size:20px;transform-origin:0 0;transform:scaleX(0.9526);color:#fff;">Slideshow</div>
<div class="a" style="left:32px;top:383px;width:306px;height:31px;background:#eff7e6;"></div>
<svg class="a" style="left:82.7px;top:392.5px;" width="12" height="12" viewBox="0 0 12 12"><path d="M1.5 0.3 L11 6 L1.5 11.7 Z" fill="#9b9b9b"/></svg>
<svg class="a" style="left:107px;top:390px;" width="20" height="18" viewBox="0 0 20 18"><path d="M0 0.3 H7.2 L9 2.6 H18 V15 H0 Z" fill="#c49a63"/><rect x="2.5" y="5" width="13" height="7.6" fill="#eff7e6"/><circle cx="6.6" cy="8.8" r="2.3" fill="#62a2cf"/></svg>
<div class="t" style="left:129.5px;top:385px;width:208px;overflow:hidden;font-size:20px;letter-spacing:-0.178px">com.example.toyo.viewflipperonbuttonclick</div>
<svg class="a" style="left:59px;top:423.5px;" width="12" height="12" viewBox="0 0 12 12"><path d="M0.3 1 L11.7 1 L6 11 Z" fill="#9b9b9b"/></svg>
<svg class="a" style="left:83px;top:421px;" width="20" height="18" viewBox="0 0 20 18"><path d="M0 0.3 H7.2 L9 2.6 H18 V15 H0 Z" fill="#c49a63"/><rect x="2.5" y="5" width="13" height="7.6" fill="#fff"/><rect x="10" y="7.8" width="9.6" height="9.6" fill="#fff"/><rect x="10.6" y="8.4" width="2.4" height="2.2" fill="#e9b422"/><rect x="13.5" y="8.4" width="2.4" height="2.2" fill="#d09410"/><rect x="16.4" y="8.4" width="2.4" height="2.2" fill="#f3c94a"/><rect x="10.6" y="11.3" width="2.4" height="2.2" fill="#d09410"/><rect x="13.5" y="11.3" width="2.4" height="2.2" fill="#f3c94a"/><rect x="16.4" y="11.3" width="2.4" height="2.2" fill="#e9b422"/><rect x="10.6" y="14.2" width="2.4" height="2.2" fill="#f3c94a"/><rect x="13.5" y="14.2" width="2.4" height="2.2" fill="#e9b422"/><rect x="16.4" y="14.2" width="2.4" height="2.2" fill="#d09410"/></svg>
<div class="t" style="left:105.40px;top:416px;font-size:20px;transform-origin:0 0;transform:scaleX(0.8675);">res</div>
<svg class="a" style="left:83px;top:454.5px;" width="12" height="12" viewBox="0 0 12 12"><path d="M0.3 1 L11.7 1 L6 11 Z" fill="#9b9b9b"/></svg>
<svg class="a" style="left:107px;top:452px;" width="20" height="18" viewBox="0 0 20 18"><path d="M0 0.3 H7.2 L9 2.6 H18 V15 H0 Z" fill="#c49a63"/><rect x="2.5" y="5" width="13" height="7.6" fill="#fff"/><circle cx="6.6" cy="8.8" r="2.3" fill="#62a2cf"/></svg>
<div class="t" style="left:129.50px;top:447px;font-size:20px;letter-spacing:-0.309px;">drawable</div>
<svg class="a" style="left:132px;top:481px;" width="16" height="20" viewBox="0 0 16 20"><path d="M1.2 1 H9.4 L13 4.6 V18 H1.2 Z" fill="#fff" stroke="#9b9b9b" stroke-width="2"/><path d="M9 1 V5 H13" fill="none" stroke="#b5b5b5" stroke-width="1.2"/><rect x="4" y="8.6" width="3" height="6.2" fill="#3f8fcf"/><path d="M4 8.6 L5.5 6 L7 8.6 Z" fill="#e8a33d"/><rect x="7.4" y="8.6" width="3" height="6.2" fill="#d9533f"/><path d="M7.4 8.6 L8.9 6 L10.4 8.6 Z" fill="#e8a33d"/></svg>
<div class="t" style="left:153.90px;top:478px;font-size:20px;letter-spacing:-0.300px;">back.jpg</div>
<svg class="a" style="left:132px;top:512px;" width="16" height="20" viewBox="0 0 16 20"><path d="M1.2 1 H9.4 L13 4.6 V18 H1.2 Z" fill="#fff" stroke="#9b9b9b" stroke-width="2"/><path d="M9 1 V5 H13" fill="none" stroke="#b5b5b5" stroke-width="1.2"/><rect x="4" y="8.6" width="3" height="6.2" fill="#3f8fcf"/><path d="M4 8.6 L5.5 6 L7 8.6 Z" fill="#e8a33d"/><rect x="7.4" y="8.6" width="3" height="6.2" fill="#d9533f"/><path d="M7.4 8.6 L8.9 6 L10.4 8.6 Z" fill="#e8a33d"/></svg>
<div class="t" style="left:153.90px;top:509px;font-size:20px;letter-spacing:-0.027px;">picture1.jpg</div>
<svg class="a" style="left:132px;top:543px;" width="16" height="20" viewBox="0 0 16 20"><path d="M1.2 1 H9.4 L13 4.6 V18 H1.2 Z" fill="#fff" stroke="#9b9b9b" stroke-width="2"/><path d="M9 1 V5 H13" fill="none" stroke="#b5b5b5" stroke-width="1.2"/><rect x="4" y="8.6" width="3" height="6.2" fill="#3f8fcf"/><path d="M4 8.6 L5.5 6 L7 8.6 Z" fill="#e8a33d"/><rect x="7.4" y="8.6" width="3" height="6.2" fill="#d9533f"/><path d="M7.4 8.6 L8.9 6 L10.4 8.6 Z" fill="#e8a33d"/></svg>
<div class="t" style="left:153.90px;top:540px;font-size:20px;letter-spacing:-0.027px;">picture2.jpg</div>
<svg class="a" style="left:132px;top:574px;" width="16" height="20" viewBox="0 0 16 20"><path d="M1.2 1 H9.4 L13 4.6 V18 H1.2 Z" fill="#fff" stroke="#9b9b9b" stroke-width="2"/><path d="M9 1 V5 H13" fill="none" stroke="#b5b5b5" stroke-width="1.2"/><rect x="4" y="8.6" width="3" height="6.2" fill="#3f8fcf"/><path d="M4 8.6 L5.5 6 L7 8.6 Z" fill="#e8a33d"/><rect x="7.4" y="8.6" width="3" height="6.2" fill="#d9533f"/><path d="M7.4 8.6 L8.9 6 L10.4 8.6 Z" fill="#e8a33d"/></svg>
<div class="t" style="left:153.90px;top:571px;font-size:20px;letter-spacing:-0.027px;">picture3.jpg</div>
<svg class="a" style="left:132px;top:605px;" width="16" height="20" viewBox="0 0 16 20"><path d="M1.2 1 H9.4 L13 4.6 V18 H1.2 Z" fill="#fff" stroke="#9b9b9b" stroke-width="2"/><path d="M9 1 V5 H13" fill="none" stroke="#b5b5b5" stroke-width="1.2"/><rect x="4" y="8.6" width="3" height="6.2" fill="#3f8fcf"/><path d="M4 8.6 L5.5 6 L7 8.6 Z" fill="#e8a33d"/><rect x="7.4" y="8.6" width="3" height="6.2" fill="#d9533f"/><path d="M7.4 8.6 L8.9 6 L10.4 8.6 Z" fill="#e8a33d"/></svg>
<div class="t" style="left:153.90px;top:602px;font-size:20px;letter-spacing:-0.027px;">picture4.jpg</div>
<svg class="a" style="left:132px;top:636px;" width="16" height="20" viewBox="0 0 16 20"><path d="M1.2 1 H9.4 L13 4.6 V18 H1.2 Z" fill="#fff" stroke="#9b9b9b" stroke-width="2"/><path d="M9 1 V5 H13" fill="none" stroke="#b5b5b5" stroke-width="1.2"/><rect x="4" y="8.6" width="3" height="6.2" fill="#3f8fcf"/><path d="M4 8.6 L5.5 6 L7 8.6 Z" fill="#e8a33d"/><rect x="7.4" y="8.6" width="3" height="6.2" fill="#d9533f"/><path d="M7.4 8.6 L8.9 6 L10.4 8.6 Z" fill="#e8a33d"/></svg>
<div class="t" style="left:153.90px;top:633px;font-size:20px;letter-spacing:-0.027px;">picture5.jpg</div>
<svg class="a" style="left:83px;top:671.5px;" width="12" height="12" viewBox="0 0 12 12"><path d="M0.3 1 L11.7 1 L6 11 Z" fill="#9b9b9b"/></svg>
<svg class="a" style="left:107px;top:669px;" width="20" height="18" viewBox="0 0 20 18"><path d="M0 0.3 H7.2 L9 2.6 H18 V15 H0 Z" fill="#c49a63"/><rect x="2.5" y="5" width="13" height="7.6" fill="#fff"/><circle cx="6.6" cy="8.8" r="2.3" fill="#62a2cf"/></svg>
<div class="t" style="left:129.80px;top:664px;font-size:20px;letter-spacing:0.068px;">layout</div>
<svg class="a" style="left:132.4px;top:698px;" width="18" height="20" viewBox="0 0 18 20"><path d="M1.2 1.1 H9.4 L13.2 4.9 V18.2 H1.2 Z" fill="#fff" stroke="#9b9b9b" stroke-width="2.2"/><path d="M9 1 V5.2 H13.2" fill="none" stroke="#b5b5b5" stroke-width="1.2"/><rect x="0.2" y="6.4" width="16.6" height="8.6" fill="#f4a940"/><path d="M6.6 8 L4 10.7 L6.6 13.4 M10 8 L12.6 10.7 L10 13.4" fill="none" stroke="#5b4a36" stroke-width="1.3"/><rect x="0.2" y="15.6" width="13.9" height="3.4" fill="#9b9b9b"/></svg>
<div class="t" style="left:153.60px;top:695px;font-size:20px;letter-spacing:-0.279px;">activity_main.xml</div>
<svg class="a" style="left:82.7px;top:733.5px;" width="12" height="12" viewBox="0 0 12 12"><path d="M1.5 0.3 L11 6 L1.5 11.7 Z" fill="#9b9b9b"/></svg>
<svg class="a" style="left:107px;top:731px;" width="20" height="18" viewBox="0 0 20 18"><path d="M0 0.3 H7.2 L9 2.6 H18 V15 H0 Z" fill="#c49a63"/><rect x="2.5" y="5" width="13" height="7.6" fill="#fff"/><circle cx="6.6" cy="8.8" r="2.3" fill="#62a2cf"/></svg>
<div class="t" style="left:129.80px;top:726px;font-size:20px;letter-spacing:0.052px;">mipmap</div>
<svg class="a" style="left:82.7px;top:764.5px;" width="12" height="12" viewBox="0 0 12 12"><path d="M1.5 0.3 L11 6 L1.5 11.7 Z" fill="#9b9b9b"/></svg>
<svg class="a" style="left:107px;top:762px;" width="20" height="18" viewBox="0 0 20 18"><path d="M0 0.3 H7.2 L9 2.6 H18 V15 H0 Z" fill="#c49a63"/><rect x="2.5" y="5" width="13" height="7.6" fill="#fff"/><circle cx="6.6" cy="8.8" r="2.3" fill="#62a2cf"/></svg>
<div class="t" style="left:129.40px;top:757px;font-size:20px;transform-origin:0 0;transform:scaleX(0.9218);">values</div>
<svg class="a" style="left:34.7px;top:795.5px;" width="12" height="12" viewBox="0 0 12 12"><path d="M1.5 0.3 L11 6 L1.5 11.7 Z" fill="#9b9b9b"/></svg>
<svg class="a" style="left:59px;top:792px;" width="18" height="18" viewBox="0 0 18 18"><path d="M13.6 3.2 A6.6 6.6 0 1 0 15.4 10.8" fill="none" stroke="#8cc34f" stroke-width="2.7"/><path d="M7.2 2.7 A6.6 6.6 0 0 1 15.5 7.6" fill="none" stroke="#22a052" stroke-width="2.7"/><circle cx="9" cy="9.2" r="3.1" fill="#1f9a4c"/></svg>
<div class="t" style="left:81.70px;top:788px;font-size:20px;transform-origin:0 0;transform:scaleX(0.9534);">Gradle Scripts</div>
<div class="a" style="left:32px;top:920px;width:306px;height:17px;background:#f3f3f3;"></div>
<div class="a" style="left:32px;top:920px;width:306px;height:1px;background:#e2e2e2;"></div>
<div class="a" style="left:33px;top:923.5px;width:152px;height:12px;background:linear-gradient(#e8e8e8,#d3d3d3);border:1px solid #bdbdbd;border-radius:3px;box-sizing:border-box;"></div>
<div class="a" style="left:339px;top:132px;width:1549px;height:33px;background:#e9e9e9;"></div>
<div class="a" style="left:339px;top:165px;width:1549px;height:1px;background:#a0a0a0;"></div>
<div class="a" style="left:339px;top:166px;width:1549px;height:772px;background:#fff;"></div>
<div class="a" style="left:339px;top:132px;width:208px;height:33px;background:#d6d6d6;"></div>
<div class="a" style="left:547px;top:132px;width:1px;height:33px;background:#888;"></div>
<svg class="a" style="left:351px;top:139px;" width="18" height="20" viewBox="0 0 18 20"><path d="M1.2 1.1 H9.4 L13.2 4.9 V18.2 H1.2 Z" fill="#e9e9e9" stroke="#9b9b9b" stroke-width="2.2"/><path d="M9 1 V5.2 H13.2" fill="none" stroke="#b5b5b5" stroke-width="1.2"/><rect x="0.2" y="6.4" width="16.6" height="8.6" fill="#f4a940"/><path d="M6.6 8 L4 10.7 L6.6 13.4 M10 8 L12.6 10.7 L10 13.4" fill="none" stroke="#5b4a36" stroke-width="1.3"/><rect x="0.2" y="15.6" width="13.9" height="3.4" fill="#9b9b9b"/></svg>
<div class="t" style="left:372.50px;top:135px;font-size:20px;letter-spacing:-0.266px;color:#262626;">activity_main.xml</div>
<svg class="a" style="left:529px;top:144px;" width="10" height="10" viewBox="0 0 10 10"><path d="M1.2 1.2 L8.8 8.8 M8.8 1.2 L1.2 8.8" stroke="#6e6e6e" stroke-width="1.9"/></svg>
<div class="a" style="left:548px;top:132px;width:208px;height:33px;background:#d6d6d6;"></div>
<div class="a" style="left:756px;top:132px;width:1px;height:34px;background:#888;"></div>
<svg class="a" style="left:557.5px;top:138.6px;" width="20" height="20" viewBox="0 0 20 20"><circle cx="10" cy="10" r="8.1" fill="#a0d8f9" stroke="#7fc4f0" stroke-width="1.2"/><path d="M12.6 7.8 A3.5 3.6 0 1 0 12.6 12.2" fill="none" stroke="#5a4a4a" stroke-width="1.35"/></svg>
<div class="t" style="left:582.00px;top:135px;font-size:20px;letter-spacing:-0.029px;color:#262626;">MainActivity.java</div>
<svg class="a" style="left:738px;top:144px;" width="10" height="10" viewBox="0 0 10 10"><path d="M1.2 1.2 L8.8 8.8 M8.8 1.2 L1.2 8.8" stroke="#6e6e6e" stroke-width="1.9"/></svg>
<div class="a" style="left:757px;top:132px;width:186px;height:36px;background:#fff;"></div>
<div class="a" style="left:944px;top:132px;width:1px;height:34px;background:#999;"></div>
<svg class="a" style="left:766.5px;top:138.6px;" width="20" height="20" viewBox="0 0 20 20"><circle cx="10" cy="10" r="8.1" fill="#a0d8f9" stroke="#7fc4f0" stroke-width="1.2"/><path d="M12.6 7.8 A3.5 3.6 0 1 0 12.6 12.2" fill="none" stroke="#5a4a4a" stroke-width="1.35"/></svg>
<div class="t" style="left:790.00px;top:135px;font-size:20px;letter-spacing:-0.448px;">Slideshow.java</div>
<svg class="a" style="left:924px;top:144px;" width="10" height="10" viewBox="0 0 10 10"><path d="M1.2 1.2 L8.8 8.8 M8.8 1.2 L1.2 8.8" stroke="#6e6e6e" stroke-width="1.9"/></svg>
<div class="a" style="left:339px;top:169px;width:1549px;height:1px;background:#d9d9d9;"></div>
<div class="a" style="left:339px;top:170px;width:32px;height:768px;background:#f0f0f0;"></div>
<div class="a" style="left:371px;top:170px;width:1px;height:768px;background:#d0d0d0;"></div>
<div class="a" style="left:339px;top:460px;width:1549px;height:29px;background:#fffae3;"></div>
<div class="a" style="left:371px;top:460px;width:1px;height:29px;background:#dcd8c4;"></div>
<div class="a" style="left:446px;top:460px;width:104px;height:29px;background:#e4e4ff;"></div>
<div class="a" style="left:1681px;top:169px;width:1px;height:769px;background:#dedede;"></div>
<div class="a" style="left:1878px;top:189px;width:10px;height:681px;background:rgba(0,0,0,0.18);border-radius:2px 0 0 2px;"></div>
<div class="a" style="left:1870px;top:446px;width:18px;height:1px;background:#a79be0;"></div>
<svg class="a" style="left:1870px;top:171px;" width="18" height="14" viewBox="0 0 18 14"><path d="M3.6 6.4 L7.6 10.4 L14 3" fill="none" stroke="#55a23f" stroke-width="3"/></svg>
<div class="c" style="top:172px"><span class="k">package</span> com.example.toyo.viewflipperonbuttonclick;</div>
<div class="c" style="top:230px"><span class="k">import</span> android.app.Activity;</div>
<div class="c" style="top:259px"><span class="k">import</span> android.os.Bundle;</div>
<div class="c" style="top:288px"><span class="k">import</span> android.widget.ViewFlipper;</div>
<div class="c" style="top:346px"><span class="k">public class</span> Slideshow <span class="k">extends</span> Activity {</div>
<div class="c" style="top:404px">    ViewFlipper <span class="f">viewFlipper</span>;</div>
<div class="c" style="top:462px">    <span class="o">@Override</span></div>
<div class="c" style="top:491px">    <span class="k">public void</span> onCreate(Bundle savedInstanceState) {</div>
<div class="c" style="top:520px">        <span class="k">super</span>.onCreate(savedInstanceState);</div>
<div class="c" style="top:549px">        setContentView(R.layout.<span class="s">activity_second</span>);</div>
<div class="c" style="top:607px">        <span class="f">viewFlipper</span> = (ViewFlipper) <span class="k">this</span>.findViewById(R.id.<span class="s">viewFlipper</span>);</div>
<div class="c" style="top:665px">        <span class="m">//sets auto flipping</span></div>
<div class="c" style="top:694px">        <span class="f">viewFlipper</span>.setAutoStart(<span class="k">true</span>);</div>
<div class="c" style="top:723px">        <span class="f">viewFlipper</span>.setFlipInterval(<span class="n">3000</span>);</div>
<div class="c" style="top:752px">        <span class="f">viewFlipper</span>.startFlipping();</div>
<div class="c" style="top:781px">    }</div>
<div class="c" style="top:810px">}</div>
<div class="a" style="left:435px;top:520px;width:1px;height:258px;background:#dcdcdc;"></div>
<svg class="a" style="left:366px;top:240px;" width="11" height="12" viewBox="0 0 11 12"><path d="M0.5 0.5 H10.5 V7.5 L5.5 11.5 L0.5 7.5 Z" fill="#fff" stroke="#c9c9c9" stroke-width="1"/><path d="M2.5 4.5 H8.5" stroke="#b4b4b4" stroke-width="1"/></svg>
<svg class="a" style="left:366px;top:296.5px;" width="11" height="12" viewBox="0 0 11 12"><path d="M0.5 11.5 H10.5 V4.5 L5.5 0.5 L0.5 4.5 Z" fill="#fff" stroke="#c9c9c9" stroke-width="1"/><path d="M2.5 7.5 H8.5" stroke="#b4b4b4" stroke-width="1"/></svg>
<svg class="a" style="left:366px;top:501px;" width="11" height="12" viewBox="0 0 11 12"><path d="M0.5 0.5 H10.5 V7.5 L5.5 11.5 L0.5 7.5 Z" fill="#fff" stroke="#c9c9c9" stroke-width="1"/><path d="M2.5 4.5 H8.5" stroke="#b4b4b4" stroke-width="1"/></svg>
<svg class="a" style="left:366px;top:791px;" width="11" height="12" viewBox="0 0 11 12"><path d="M0.5 11.5 H10.5 V4.5 L5.5 0.5 L0.5 4.5 Z" fill="#fff" stroke="#c9c9c9" stroke-width="1"/><path d="M2.5 7.5 H8.5" stroke="#b4b4b4" stroke-width="1"/></svg>
<svg class="a" style="left:341px;top:348px;" width="18" height="20" viewBox="0 0 18 20"><path d="M1.2 1.1 H9.4 L13.2 4.9 V18.2 H1.2 Z" fill="#f0f0f0" stroke="#9b9b9b" stroke-width="2.2"/><path d="M9 1 V5.2 H13.2" fill="none" stroke="#b5b5b5" stroke-width="1.2"/><rect x="0.2" y="6.4" width="16.6" height="8.6" fill="#f4a940"/><path d="M6.6 8 L4 10.7 L6.6 13.4 M10 8 L12.6 10.7 L10 13.4" fill="none" stroke="#5b4a36" stroke-width="1.3"/><rect x="0.2" y="15.6" width="13.9" height="3.4" fill="#9b9b9b"/></svg>
<svg class="a" style="left:340.5px;top:495.4px;" width="17" height="18" viewBox="0 0 17 18"><circle cx="5.6" cy="9.4" r="4.9" fill="#5ba8da"/><path d="M3.9 11.4 V9 A1.7 1.9 0 0 1 7.3 9 V11.4" fill="#9fd0f0" stroke="#4a5f70" stroke-width="1"/><path d="M12.4 15.6 V3.6" fill="none" stroke="#d8513a" stroke-width="1.7"/><path d="M9.2 4.8 L12.4 0.6 L15.6 4.8 Z" fill="#d8513a"/></svg>
<div class="a" style="left:1888px;top:132px;width:1px;height:840px;background:#b4b4b4;"></div>
<div class="a" style="left:1889px;top:132px;width:31px;height:840px;background:#e9e9e9;"></div>
<div class="t" style="left:1895px;top:140px;font-size:21px;color:#4a87b5;font-weight:bold;font-style:italic;">m</div>
<div class="t" style="left:1913px;top:170.00px;font-size:19px;line-height:19px;color:#000;transform-origin:0 0;transform:rotate(90deg) scaleX(0.9011)">Maven Projects</div>
<svg class="a" style="left:1895.45px;top:316.25px;" width="17.1" height="17.1" viewBox="0 0 18 18"><path d="M13.6 3.2 A6.6 6.6 0 1 0 15.4 10.8" fill="none" stroke="#8cc34f" stroke-width="2.7"/><path d="M7.2 2.7 A6.6 6.6 0 0 1 15.5 7.6" fill="none" stroke="#22a052" stroke-width="2.7"/><circle cx="9" cy="9.2" r="3.1" fill="#1f9a4c"/></svg>
<div class="t" style="left:1913px;top:338.30px;font-size:19px;line-height:19px;color:#000;transform-origin:0 0;transform:rotate(90deg) scaleX(0.8716)">Gradle</div>
<svg class="a" style="left:1895.27px;top:814.285px;" width="17.46" height="18.43" viewBox="0 0 18 19"><g fill="#8ab80f"><path d="M4.2 6.2 A4.8 4.6 0 0 1 13.8 6.2 Z"/><rect x="4.2" y="7" width="9.6" height="8" rx="1"/><rect x="1.2" y="7" width="2.2" height="6.4" rx="1.1"/><rect x="14.6" y="7" width="2.2" height="6.4" rx="1.1"/><rect x="5.8" y="14" width="2.2" height="4.6" rx="1.1"/><rect x="10" y="14" width="2.2" height="4.6" rx="1.1"/><path d="M5.4 1.2 L6.6 3 M12.6 1.2 L11.4 3" stroke="#8ab80f" stroke-width="0.8"/></g><circle cx="7" cy="4.2" r="0.7" fill="#fff"/><circle cx="11" cy="4.2" r="0.7" fill="#fff"/></svg>
<div class="t" style="left:1913px;top:836.50px;font-size:19px;line-height:19px;color:#000;transform-origin:0 0;transform:rotate(90deg) scaleX(0.9795)">Android Model</div>
<div class="a" style="left:32px;top:937px;width:1856px;height:1px;background:#9f9f9f;"></div>
<div class="a" style="left:32px;top:938px;width:1856px;height:33px;background:linear-gradient(#efefef,#dcdcdc);"></div>
<div class="t" style="left:37.00px;top:940px;font-size:20px;transform-origin:0 0;transform:scaleX(0.9491);color:#787878;">Android Monitor</div>
<svg class="a" style="left:1831.26px;top:946.26px;" width="15.48" height="15.48" viewBox="0 0 18 18"><g transform="translate(9 9)"><rect x="-1.7" y="-8.6" width="3.4" height="4" fill="#6e6e6e" transform="rotate(0)"/><rect x="-1.7" y="-8.6" width="3.4" height="4" fill="#6e6e6e" transform="rotate(45)"/><rect x="-1.7" y="-8.6" width="3.4" height="4" fill="#6e6e6e" transform="rotate(90)"/><rect x="-1.7" y="-8.6" width="3.4" height="4" fill="#6e6e6e" transform="rotate(135)"/><rect x="-1.7" y="-8.6" width="3.4" height="4" fill="#6e6e6e" transform="rotate(180)"/><rect x="-1.7" y="-8.6" width="3.4" height="4" fill="#6e6e6e" transform="rotate(225)"/><rect x="-1.7" y="-8.6" width="3.4" height="4" fill="#6e6e6e" transform="rotate(270)"/><rect x="-1.7" y="-8.6" width="3.4" height="4" fill="#6e6e6e" transform="rotate(315)"/><circle r="5" fill="none" stroke="#6e6e6e" stroke-width="3.2"/></g></svg>
<svg class="a" style="left:1849px;top:951px;" width="8" height="6" viewBox="0 0 8 6"><path d="M0.6 0.6 H7.4 L4 4.8 Z" fill="#6e6e6e"/></svg>
<svg class="a" style="left:1864px;top:945px;" width="18" height="18" viewBox="0 0 18 18"><path d="M8.6 1 V10 M5.4 7 L8.6 10.4 L11.8 7" fill="none" stroke="#6e6e6e" stroke-width="1.4"/><rect x="1.6" y="13" width="14.4" height="3" fill="#8a8a8a"/></svg>
<div class="a" style="left:0px;top:971px;width:1920px;height:2px;background:#909090;"></div>
<div class="a" style="left:0px;top:973px;width:1920px;height:31px;background:#e9e9e9;"></div>
<div class="a" style="left:142px;top:973px;width:208px;height:31px;background:#bdbdbd;"></div>
<svg class="a" style="left:43px;top:981px;" width="15.6" height="15.6" viewBox="0 0 17 17"><rect x="0.8" y="0.8" width="15.4" height="15.4" fill="#4a4a4a" stroke="#8a8a8a" stroke-width="1.6"/><path d="M3.6 6 L6.4 8.6 L3.6 11.2" fill="none" stroke="#fff" stroke-width="1.4"/><path d="M8 12 H12.6" stroke="#fff" stroke-width="1.4"/></svg>
<div class="t" style="left:63.00px;top:974px;font-size:20px;transform-origin:0 0;transform:scaleX(0.8799);">Terminal</div>
<svg class="a" style="left:160.23px;top:980.365px;" width="16.74" height="17.67" viewBox="0 0 18 19"><g fill="#8ab80f"><path d="M4.2 6.2 A4.8 4.6 0 0 1 13.8 6.2 Z"/><rect x="4.2" y="7" width="9.6" height="8" rx="1"/><rect x="1.2" y="7" width="2.2" height="6.4" rx="1.1"/><rect x="14.6" y="7" width="2.2" height="6.4" rx="1.1"/><rect x="5.8" y="14" width="2.2" height="4.6" rx="1.1"/><rect x="10" y="14" width="2.2" height="4.6" rx="1.1"/><path d="M5.4 1.2 L6.6 3 M12.6 1.2 L11.4 3" stroke="#8ab80f" stroke-width="0.8"/></g><circle cx="7" cy="4.2" r="0.7" fill="#fff"/><circle cx="11" cy="4.2" r="0.7" fill="#fff"/></svg>
<div class="t" style="left:181.00px;top:974px;font-size:20px;transform-origin:0 0;transform:scaleX(0.9395);"><u>6</u>: Android Monitor</div>
<svg class="a" style="left:365.6px;top:981.6px;" width="15.4" height="15.4" viewBox="0 0 17 17"><rect x="0.8" y="0.8" width="15.4" height="15.4" fill="#f0b465" stroke="#d8954a" stroke-width="1.4"/><path d="M3.6 5.6 H13.4 M3.6 8.6 H13.4 M3.6 11.6 H13.4" stroke="#a86f2e" stroke-width="1.6" stroke-dasharray="2.4 1"/></svg>
<div class="t" style="left:386.50px;top:974px;font-size:20px;transform-origin:0 0;transform:scaleX(0.8511);"><u>0</u>: Messages</div>
<svg class="a" style="left:509px;top:980px;" width="18" height="19" viewBox="0 0 18 19"><path d="M1.6 1 L14.4 9 L1.6 17 Z" fill="#35a84a"/><circle cx="14" cy="15.4" r="2.4" fill="#49c24f"/></svg>
<div class="t" style="left:529.50px;top:974px;font-size:20px;transform-origin:0 0;transform:scaleX(0.8316);"><u>4</u>: Run</div>
<svg class="a" style="left:603px;top:979px;" width="19" height="20" viewBox="0 0 19 20"><circle cx="11" cy="9.4" r="5.4" fill="#f1c38f"/><path d="M5.4 8 C5.6 3.4 16.4 3.4 16.6 8 L14 6.8 L8 6.8 Z" fill="#5a4632"/><path d="M3.6 19.6 C4 15 8 14.4 11 14.4 C14 14.4 18 15 18.4 19.6 Z" fill="#4a97cf"/><rect x="0.6" y="0.6" width="7.8" height="6.4" rx="1.4" fill="#fff" stroke="#8a8a8a" stroke-width="1"/><path d="M2.2 2.8 H6.6 M2.2 4.8 H5.6" stroke="#8a8a8a" stroke-width="0.9"/></svg>
<div class="t" style="left:624.00px;top:974px;font-size:20px;transform-origin:0 0;transform:scaleX(0.8621);">TODO</div>
<svg class="a" style="left:1598px;top:981.6px;" width="16" height="15" viewBox="0 0 16 15"><path d="M0.6 0.6 H14.6 V11 H13 L14.4 14.4 L9.6 11 H0.6 Z" fill="#79cf8b"/><path d="M7.4 2.2 V6.8" stroke="#3b5f44" stroke-width="1.8"/><circle cx="7.4" cy="8.8" r="1" fill="#3b5f44"/></svg>
<div class="t" style="left:1614.50px;top:977px;font-size:12px;letter-spacing:-0.672px;font-weight:bold;">2</div>
<div class="t" style="left:1626.50px;top:974px;font-size:20px;transform-origin:0 0;transform:scaleX(0.8439);">Event Log</div>
<svg class="a" style="left:1736px;top:982px;" width="14" height="14" viewBox="0 0 14 14"><rect x="0.8" y="0.8" width="12.4" height="12.4" fill="#d6e6f4" stroke="#5a97c8" stroke-width="1.6"/><rect x="0.8" y="0.8" width="12.4" height="2.6" fill="#5a97c8"/><path d="M3.6 6.6 H10 M3.6 9.2 H8" stroke="#5e5e5e" stroke-width="1.5"/></svg>
<div class="t" style="left:1756.00px;top:974px;font-size:20px;transform-origin:0 0;transform:scaleX(0.8564);">Gradle Console</div>
<div class="a" style="left:0px;top:1004px;width:1920px;height:1px;background:#9c9c9c;"></div>
<div class="a" style="left:0px;top:1005px;width:1920px;height:1px;background:#f7f7f7;"></div>
<div class="a" style="left:0px;top:1006px;width:1920px;height:24px;background:#eaeaea;"></div>
<div class="a" style="left:0px;top:1030px;width:1920px;height:2px;background:#111;"></div>
<svg class="a" style="left:4px;top:1008px;" width="20" height="18" viewBox="0 0 20 18"><rect x="1" y="1" width="17" height="14.6" fill="#c9c9c9" stroke="#7d7d7d" stroke-width="1.6"/><path d="M1 17 H18" stroke="#7d7d7d" stroke-width="1.4"/></svg>
<div class="t" style="left:33.00px;top:1003px;font-size:20px;letter-spacing:-0.298px;">No occurrences found</div>
<div class="a" style="left:1439px;top:1006px;width:1px;height:24px;background:#c9c9c9;"></div>
<div class="a" style="left:1504px;top:1006px;width:1px;height:24px;background:#c9c9c9;"></div>
<div class="a" style="left:1564px;top:1006px;width:1px;height:24px;background:#c9c9c9;"></div>
<div class="a" style="left:1634px;top:1006px;width:1px;height:24px;background:#c9c9c9;"></div>
<div class="a" style="left:1858px;top:1006px;width:1px;height:24px;background:#c9c9c9;"></div>
<div class="t" style="left:1448.00px;top:1003px;font-size:20px;transform-origin:0 0;transform:scaleX(0.9473);">11:14</div>
<div class="t" style="left:1508.00px;top:1003px;font-size:20px;transform-origin:0 0;transform:scaleX(0.8043);">CRLF</div>
<svg class="a" style="left:1551.5px;top:1011.5px;" width="8" height="12" viewBox="0 0 8 12"><path d="M4 0.6 L7.2 4.6 H0.8 Z M4 11.4 L7.2 7.4 H0.8 Z" fill="#4a4a4a"/></svg>
<div class="t" style="left:1569.00px;top:1003px;font-size:20px;transform-origin:0 0;transform:scaleX(0.9089);">UTF-8</div>
<svg class="a" style="left:1621.5px;top:1011.5px;" width="8" height="12" viewBox="0 0 8 12"><path d="M4 0.6 L7.2 4.6 H0.8 Z M4 11.4 L7.2 7.4 H0.8 Z" fill="#4a4a4a"/></svg>
<div class="t" style="left:1638.50px;top:1003px;font-size:20px;letter-spacing:-0.034px;color:#9c9c9c;">Context: &lt;no context&gt;</div>
<svg class="a" style="left:1866px;top:1009px;" width="14" height="16" viewBox="0 0 14 16"><path d="M2 8 V5.4 A2.6 2.6 0 0 1 7.2 5.4 V6.4" fill="none" stroke="#7d7d7d" stroke-width="1.5"/><rect x="3.6" y="8" width="9" height="6.6" fill="none" stroke="#7d7d7d" stroke-width="1.6"/><rect x="7" y="10" width="2.2" height="2.6" fill="#7d7d7d"/></svg>
<svg class="a" style="left:1893px;top:1008px;" width="20" height="20" viewBox="0 0 20 20"><path d="M4 9 V5 A3 3 0 0 1 7 2 H13 A3 3 0 0 1 16 5 V9" fill="#e9e9e9" stroke="#7d7d7d" stroke-width="1.5"/><rect x="2" y="8.6" width="16" height="4.2" fill="#7d7d7d"/><circle cx="7.4" cy="6" r="1.1" fill="#7d7d7d"/><circle cx="12.6" cy="6" r="1.1" fill="#7d7d7d"/><path d="M5 13 V16 H15 V13 M7 16 L5.4 19.4 M13 16 L14.6 19.4 M8.4 19.4 H11.6" fill="none" stroke="#7d7d7d" stroke-width="1.4"/></svg>
</body></html>
